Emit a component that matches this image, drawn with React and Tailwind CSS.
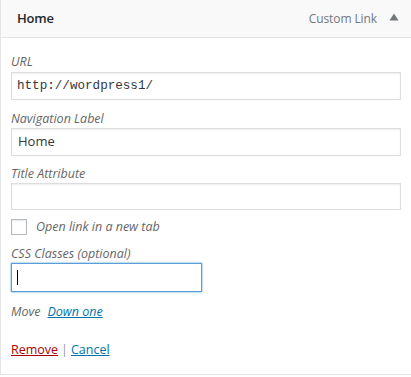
export default function App() {
  const font = { fontFamily: '"Open Sans", "Noto Sans", sans-serif' };
  return (
    <div className="w-[411px] h-[377px] bg-white overflow-hidden" style={font}>
      <div className="border-l border-b border-[#e5e5e5] h-[375px] flex flex-col">
        <div className="h-[38px] bg-[#f9f9f9] border-b border-[#e5e5e5] flex items-center pl-[16px] pr-[10px] shrink-0">
          <span className="text-[13px] font-semibold text-[#23282d] tracking-[-0.2px]">Home</span>
          <span className="ml-auto text-[12px] text-[#72777c] tracking-[-0.1px]">Custom Link</span>
          <svg width="10" height="8" viewBox="0 0 10 8" className="ml-[12px] mr-[2px] mb-[4px]">
            <polygon points="5,0.5 9.5,7.5 0.5,7.5" fill="#72777c" />
          </svg>
        </div>
        <div className="pl-[10px] pr-[10px] flex flex-col">
          <label className="mt-[15px] text-[12.5px] italic text-[#666] leading-[18px]">URL</label>
          <div className="mt-[1px] h-[28px] w-[390px] border border-[#ddd] shadow-[inset_0_1px_2px_rgba(0,0,0,0.07)] flex items-center px-[5px]">
            <span className="text-[12.6px] text-[#32373c]" style={{ fontFamily: '"Liberation Mono", "DejaVu Sans Mono", monospace' }}>http://wordpress1/</span>
          </div>
          <label className="mt-[10px] text-[12.5px] italic text-[#666] leading-[18px]">Navigation Label</label>
          <div className="h-[28px] w-[390px] border border-[#ddd] shadow-[inset_0_1px_2px_rgba(0,0,0,0.07)] flex items-center px-[6px]">
            <span className="text-[13px] text-[#32373c]">Home</span>
          </div>
          <label className="mt-[9px] text-[12.5px] italic text-[#666] leading-[18px]">Title Attribute</label>
          <div className="h-[27px] w-[390px] border border-[#ddd] shadow-[inset_0_1px_2px_rgba(0,0,0,0.07)]"></div>
          <div className="mt-[9px] h-[16px] flex items-center">
            <div className="w-[16px] h-[16px] border border-[#b4b9be] bg-white shadow-[inset_0_1px_2px_rgba(0,0,0,0.1)]"></div>
            <span className="ml-[9px] text-[12.5px] italic text-[#666] leading-[16px]">Open link in a new tab</span>
          </div>
          <label className="mt-[10px] text-[12.5px] italic text-[#666] leading-[18px]">CSS Classes (optional)</label>
          <div className="h-[29px] w-[191px] border border-[#5b9dd9] shadow-[0_0_2px_rgba(30,140,190,0.8)] flex items-center px-[5px]">
            <div className="w-[1px] h-[15px] bg-black"></div>
          </div>
          <div className="mt-[11px] flex items-center text-[12.5px] leading-[18px]">
            <span className="italic text-[#666]">Move</span>
            <a className="ml-[7px] italic text-[#0073aa] underline">Down one</a>
          </div>
          <div className="mt-[20px] flex items-center text-[12.5px] leading-[18px]">
            <a className="text-[#a00] underline">Remove</a>
            <span className="mx-[3px] text-[#999]">|</span>
            <a className="text-[#0073aa] underline">Cancel</a>
          </div>
        </div>
      </div>
    </div>
  );
}
